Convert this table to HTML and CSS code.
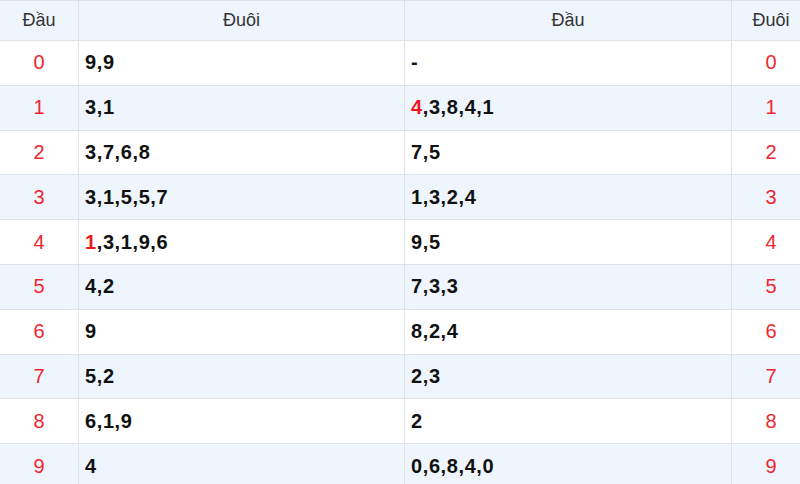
FILE: index.html
```html
<!DOCTYPE html>
<html lang="vi">
<head>
<meta charset="utf-8">
<title>Loto</title>
<link rel="stylesheet" href="styles.css">
</head>
<body>
<div class="wrap">
<table class="loto">
  <colgroup>
    <col class="c-head"><col class="c-list"><col class="c-list2"><col class="c-head">
  </colgroup>
  <thead>
    <tr><th>Đầu</th><th>Đuôi</th><th>Đầu</th><th>Đuôi</th></tr>
  </thead>
  <tbody>
    <tr><td class="num">0</td><td class="val">9,9</td><td class="val">-</td><td class="num">0</td></tr>
    <tr><td class="num">1</td><td class="val">3,1</td><td class="val"><span class="hl">4</span>,3,8,4,1</td><td class="num">1</td></tr>
    <tr><td class="num">2</td><td class="val">3,7,6,8</td><td class="val">7,5</td><td class="num">2</td></tr>
    <tr><td class="num">3</td><td class="val">3,1,5,5,7</td><td class="val">1,3,2,4</td><td class="num">3</td></tr>
    <tr><td class="num">4</td><td class="val"><span class="hl">1</span>,3,1,9,6</td><td class="val">9,5</td><td class="num">4</td></tr>
    <tr><td class="num">5</td><td class="val">4,2</td><td class="val">7,3,3</td><td class="num">5</td></tr>
    <tr><td class="num">6</td><td class="val">9</td><td class="val">8,2,4</td><td class="num">6</td></tr>
    <tr><td class="num">7</td><td class="val">5,2</td><td class="val">2,3</td><td class="num">7</td></tr>
    <tr><td class="num">8</td><td class="val">6,1,9</td><td class="val">2</td><td class="num">8</td></tr>
    <tr><td class="num">9</td><td class="val">4</td><td class="val">0,6,8,4,0</td><td class="num">9</td></tr>
  </tbody>
</table>
</div>
</body>
</html>
```
FILE: styles.css
```css
html, body {
  margin: 0;
  padding: 0;
  background: #ffffff;
}
.wrap {
  width: 800px;
  height: 484px;
  overflow: hidden;
}
.loto {
  border-collapse: collapse;
  table-layout: fixed;
  width: 810px;
  margin-left: -1px;
  font-family: "Liberation Sans", Arial, sans-serif;
}
.c-head { width: 79px; }
.c-list { width: 326px; }
.c-list2 { width: 327px; }
.loto th, .loto td {
  border: 1px solid #dfe3e8;
  padding: 0 6px;
}
.loto th {
  height: 39px;
  background: #eef5fd;
  color: #333333;
  font-weight: normal;
  font-size: 18px;
  text-align: center;
}
.loto td {
  height: 43.8px;
}
.loto tbody tr:nth-child(even) td {
  background: #eef5fd;
}
.num {
  text-align: center;
  color: #f0262f;
  font-size: 20px;
}
.val {
  font-weight: bold;
  font-size: 20px;
  letter-spacing: 0.6px;
  color: #111111;
  text-align: left;
  padding-top: 3px;
}
.hl {
  color: #f0141e;
}
```
